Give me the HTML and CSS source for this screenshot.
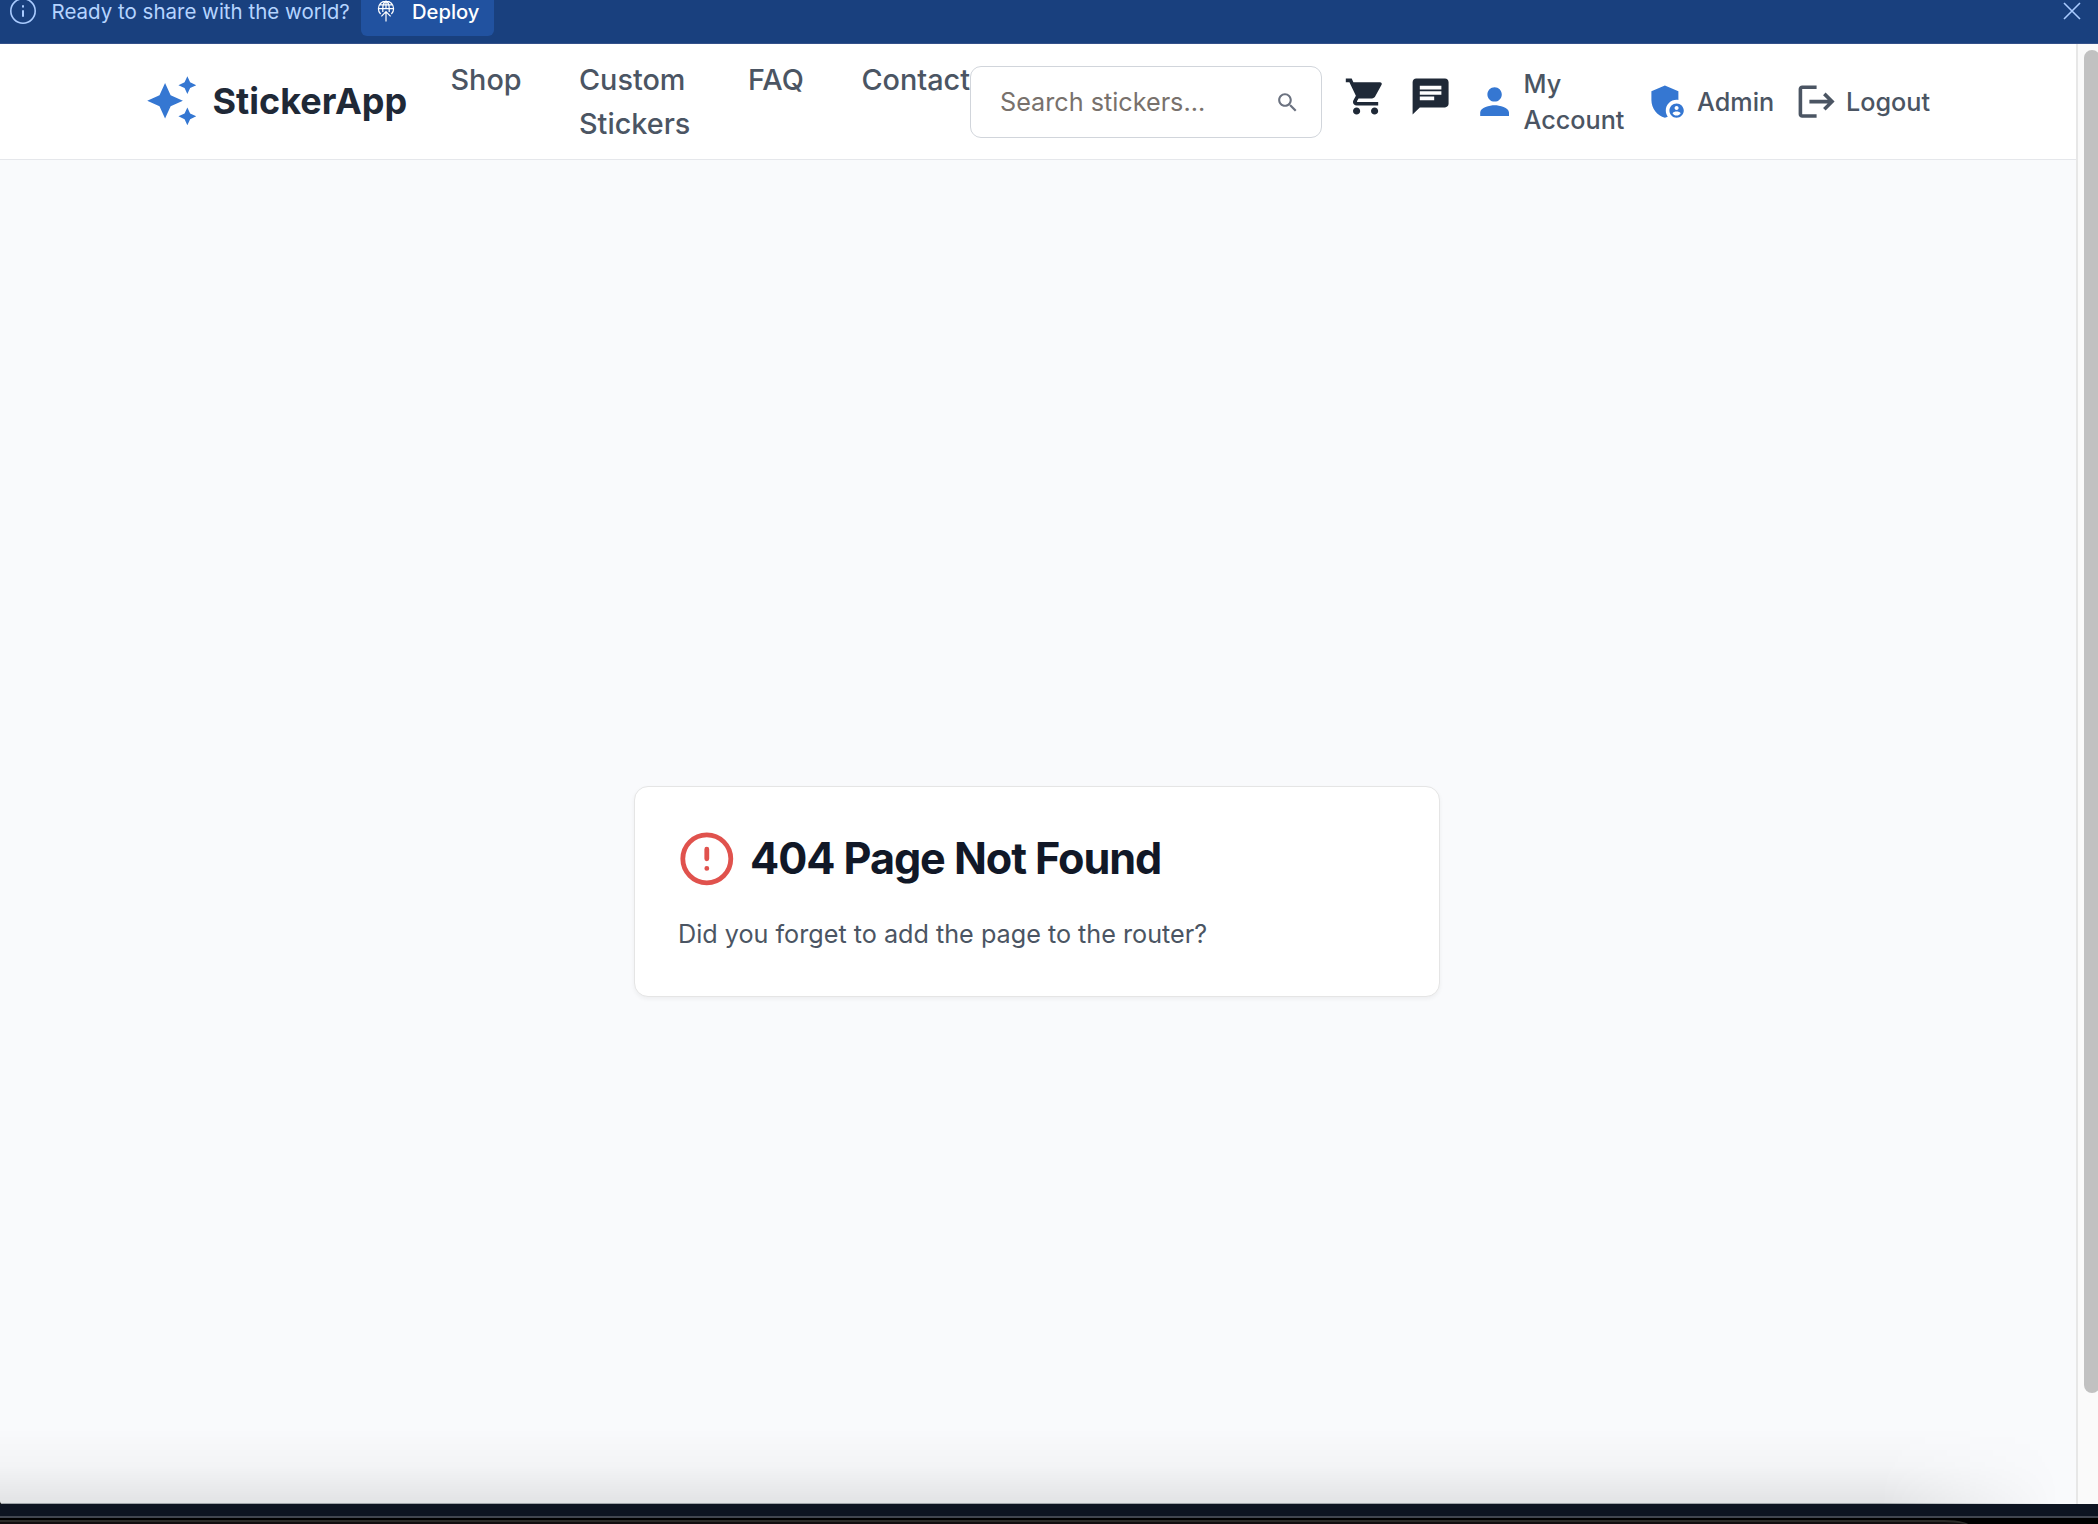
FILE: index.html
```html
<!DOCTYPE html>
<html lang="en">
<head>
<meta charset="utf-8">
<title>StickerApp</title>
<link rel="stylesheet" href="styles.css">
</head>
<body>
<div class="banner">
  <svg class="banner-info" viewBox="0 0 26 26" fill="none" stroke="#a9cbff" stroke-width="1.6"><circle cx="13" cy="13" r="12.2"/><path d="M13 12.2v6.6" stroke-width="2"/><path d="M13 7.2v2.4" stroke-width="2"/></svg>
  <span class="banner-text">Ready to share with the world?</span>
  <a class="deploy"><svg class="deploy-icon" viewBox="0 0 18 22" fill="none" stroke="#fff" stroke-width="1.2"><path d="M3.600 14A7.600 7.600 0 1 1 14.400 14M1.400 8.600h15.200M2.800 4.800h12.400M5.800 12V8.600C5.800 5 7 2 9 1.100c2 .9 3.200 3.900 3.200 7.500V12M9 1v7.600M9 21.500V11.600M4.400 16.400L9 11.600l4.600 4.800"/></svg><span>Deploy</span></a>
  <svg class="close" viewBox="0 0 18 18" stroke="#a9cbff" stroke-width="1.6"><path d="M1 1l16 16M17 1L1 17"/></svg>
</div>
<div class="viewport">
  <div class="app">
    <header class="header">
      <a class="logo"><svg class="logo-icon" viewBox="0 0 24 24" fill="#3577d2"><path d="M19 9l1.25-2.75L23 5l-2.75-1.25L19 1l-1.25 2.75L15 5l2.75 1.25L19 9zm-7.5.5L9 4 6.5 9.5 1 12l5.5 2.5L9 20l2.5-5.5L17 12l-5.500-2.500zM19 15l-1.250 2.750L15 19l2.750 1.250L19 23l1.250-2.750L23 19l-2.750-1.250L19 15z"/></svg><span>StickerApp</span></a>
      <nav class="nav"><a class="nav-shop">Shop</a><a class="nav-custom">Custom Stickers</a><a class="nav-faq">FAQ</a><a>Contact</a></nav>
      <div class="search"><span>Search stickers...</span><svg viewBox="0 0 24 24" fill="#6b7280"><path d="M15.500 14h-.79l-.28-.27C15.410 12.590 16 11.110 16 9.500 16 5.910 13.090 3 9.500 3S3 5.910 3 9.500 5.910 16 9.500 16c1.610 0 3.090-.59 4.230-1.570l.27.28v.79l5 4.990L20.490 19l-4.990-5zm-6 0C7.010 14 5 11.990 5 9.500S7.010 5 9.500 5 14 7.010 14 9.500 11.990 14 9.500 14z"/></svg></div>
      <div class="tools">
        <svg class="icon cart" viewBox="0 0 24 24" fill="#1f2937"><path d="M7 18c-1.100 0-1.990.9-1.990 2S5.900 22 7 22s2-.9 2-2-.9-2-2-2zM1 2v2h2l3.600 7.590-1.350 2.450c-.16.28-.25.61-.25.96 0 1.100.9 2 2 2h12v-2H7.420c-.14 0-.25-.11-.25-.25l.03-.12.9-1.630h7.450c.75 0 1.410-.41 1.750-1.030l3.580-6.490A1.003 1.003 0 0 0 20 4H5.210l-.94-2H1zm16 16c-1.100 0-1.990.9-1.990 2s.89 2 1.990 2 2-.9 2-2-.9-2-2-2z"/></svg>
        <svg class="icon chat" viewBox="0 0 24 24" fill="#1f2937"><path d="M20 2H4c-1.100 0-1.990.9-1.990 2L2 22l4-4h14c1.100 0 2-.9 2-2V4c0-1.100-.9-2-2-2zM6 9h12v2H6V9zm8 5H6v-2h8v2zm4-6H6V6h12v2z"/></svg>
        <a class="account"><svg class="icon" viewBox="0 0 24 24" fill="#3577d2"><path d="M12 12c2.210 0 4-1.790 4-4s-1.790-4-4-4-4 1.790-4 4 1.790 4 4 4zm0 2c-2.670 0-8 1.340-8 4v2h16v-2c0-2.660-5.330-4-8-4z"/></svg><span>My<br>Account</span></a>
        <a class="admin"><svg class="icon" viewBox="0 0 24 24" fill="#3577d2" fill-rule="evenodd"><path d="M17 11c.34 0 .67.04 1 .09V6.270L10.500 3 3 6.270v4.910c0 4.540 3.200 8.790 7.500 9.820.55-.13 1.080-.32 1.600-.55-.69-.98-1.100-2.170-1.100-3.450 0-3.310 2.690-6 6-6z"/><path d="M17 13c-2.210 0-4 1.790-4 4s1.790 4 4 4 4-1.790 4-4-1.790-4-4-4zm0 1.380c.62 0 1.120.51 1.120 1.120s-.5 1.120-1.120 1.120-1.120-.5-1.120-1.120.5-1.120 1.120-1.120zm0 5.370c-.93 0-1.740-.46-2.240-1.170.05-.72 1.510-1.080 2.240-1.080s2.190.36 2.240 1.080c-.5.71-1.310 1.170-2.240 1.170z"/></svg><span>Admin</span></a>
        <a class="logout"><svg class="icon" viewBox="0 0 24 24" fill="#4b5563"><path d="M17 7l-1.410 1.410L18.170 11H8v2h10.170l-2.580 2.580L17 17l5-5zM4 5h8V3H4c-1.100 0-2 .9-2 2v14c0 1.100.9 2 2 2h8v-2H4V5z"/></svg><span>Logout</span></a>
      </div>
    </header>
    <main class="main">
      <section class="card">
        <div class="card-head"><svg viewBox="0 0 24 24" fill="none" stroke="#e0524d" stroke-width="2" stroke-linecap="round"><circle cx="12" cy="12" r="10"/><path d="M12 8v4M12 16h.01"/></svg><h1>404 Page Not Found</h1></div>
        <p>Did you forget to add the page to the router?</p>
      </section>
      <div class="fade"></div>
    </main>
  </div>
  <div class="scroll"><div class="thumb"></div></div>
</div>
<div class="edge"></div>
<div class="dock"><div class="dock-panel"></div></div>
</body>
</html>
```
FILE: styles.css
```css
* { box-sizing: border-box; }
body { margin: 0; width: 2098px; height: 1524px; overflow: hidden; background: #000; font-family: Inter, sans-serif; color: #4b5563; display: flex; flex-direction: column; }
svg { display: block; flex: none; }
a, span { white-space: nowrap; }

.banner { height: 44px; flex: none; background: #19407e; border-bottom: 1px solid #34518a; display: flex; align-items: flex-start; font-size: 20.500px; line-height: 24px; color: #b5d4ff; }
.banner-info { width: 26px; height: 26px; margin: -2px 0 0 10px; }
.banner-text { margin-left: 15.500px; width: 309.500px; }
.deploy { width: 133px; height: 36px; background: #2152a0; border-radius: 0 0 6px 6px; color: #fff; display: flex; align-items: flex-start; }
.deploy-icon { width: 18px; height: 22px; margin-left: 16px; }
.deploy span { margin-left: 17px; font-size: 20.200px; font-weight: 500; }
.close { width: 18px; height: 18px; margin: 2px 17px 0 auto; }

.viewport { height: 1460px; flex: none; display: flex; border-bottom-left-radius: 3px; overflow: hidden; }
.app { width: 2076px; display: flex; flex-direction: column; background: #f9fafc; }
.scroll { width: 22px; background: #fafafa; border-left: 2px solid #e7e7e7; padding: 6px 0 0 6px; }
.thumb { width: 16px; height: 1343px; border-radius: 8px; background: #c1c1c1; }

.header { height: 116px; flex: none; background: #fff; border-bottom: 1px solid #e5e7eb; padding-left: 145px; display: flex; align-items: center; }
.logo { display: flex; align-items: center; width: 305.500px; gap: 14px; margin-top: -1px; font-size: 36px; font-weight: 700; color: #1f2937; }
.logo-icon { width: 53.500px; height: 53.500px; }
.nav { display: flex; width: 519.500px; height: 88px; font-size: 28.800px; line-height: 44px; font-weight: 500; }
.nav-shop { width: 128.500px; }
.nav-custom { width: 169px; padding-right: 50px; white-space: normal; }
.nav-faq { width: 113.500px; }
.search { width: 352px; height: 72px; border: 1px solid #d1d5db; border-radius: 11px; padding: 0 20.500px 0 29px; display: flex; align-items: center; justify-content: space-between; font-size: 25.200px; color: #78716c; }
.search svg { width: 25.200px; height: 25.200px; margin-top: 2px; }
.tools { display: flex; align-items: center; font-size: 25.200px; line-height: 36px; font-weight: 500; }
.icon { width: 43.200px; height: 43.200px; }
.cart { margin: -10px 0 0 22px; }
.chat { margin: -10px 0 0 22px; }
.tools a { display: flex; align-items: center; }
.account { margin-left: 21px; width: 172.500px; gap: 7px; }
.admin { width: 149.500px; gap: 8px; }
.logout { gap: 7.500px; }

.main { flex: 1; display: flex; flex-direction: column; align-items: center; padding-top: 626px; }
.card { width: 806px; height: 211px; margin-right: 2px; background: #fff; border: 1px solid #e5e5e5; border-radius: 14px; box-shadow: 0 2px 4px rgba(0,0,0,.05); padding: 42px 43px 0; }
.card-head { display: flex; align-items: center; height: 59px; gap: 14.500px; }
.card-head svg { width: 57.600px; height: 57.600px; }
h1 { margin: -1px 0 0; font-size: 43.200px; font-weight: 700; letter-spacing: -1.080px; color: #111827; white-space: nowrap; }
p { margin: 28px 0 0; font-size: 25.200px; line-height: 37px; white-space: nowrap; }
.fade { width: 100%; height: 76px; margin-top: auto; background: linear-gradient(to bottom, rgba(0,0,0,0), rgba(0,0,0,.025) 50%, rgba(0,0,0,.09)); -webkit-mask-image: linear-gradient(to right, #000 1880px, transparent 2060px); mask-image: linear-gradient(to right, #000 1880px, transparent 2060px); border-bottom: 1px solid #9ea4a8; }

.edge { height: 14px; flex: none; background: #0d1421; border-bottom: 2px solid #414650; }
.dock { flex: 1; padding-top: 2px; }
.dock-panel { width: 1972px; height: 12px; border-top: 2px solid #2c2c29; border-top-right-radius: 28px 8px; background: #120e10; }
```
